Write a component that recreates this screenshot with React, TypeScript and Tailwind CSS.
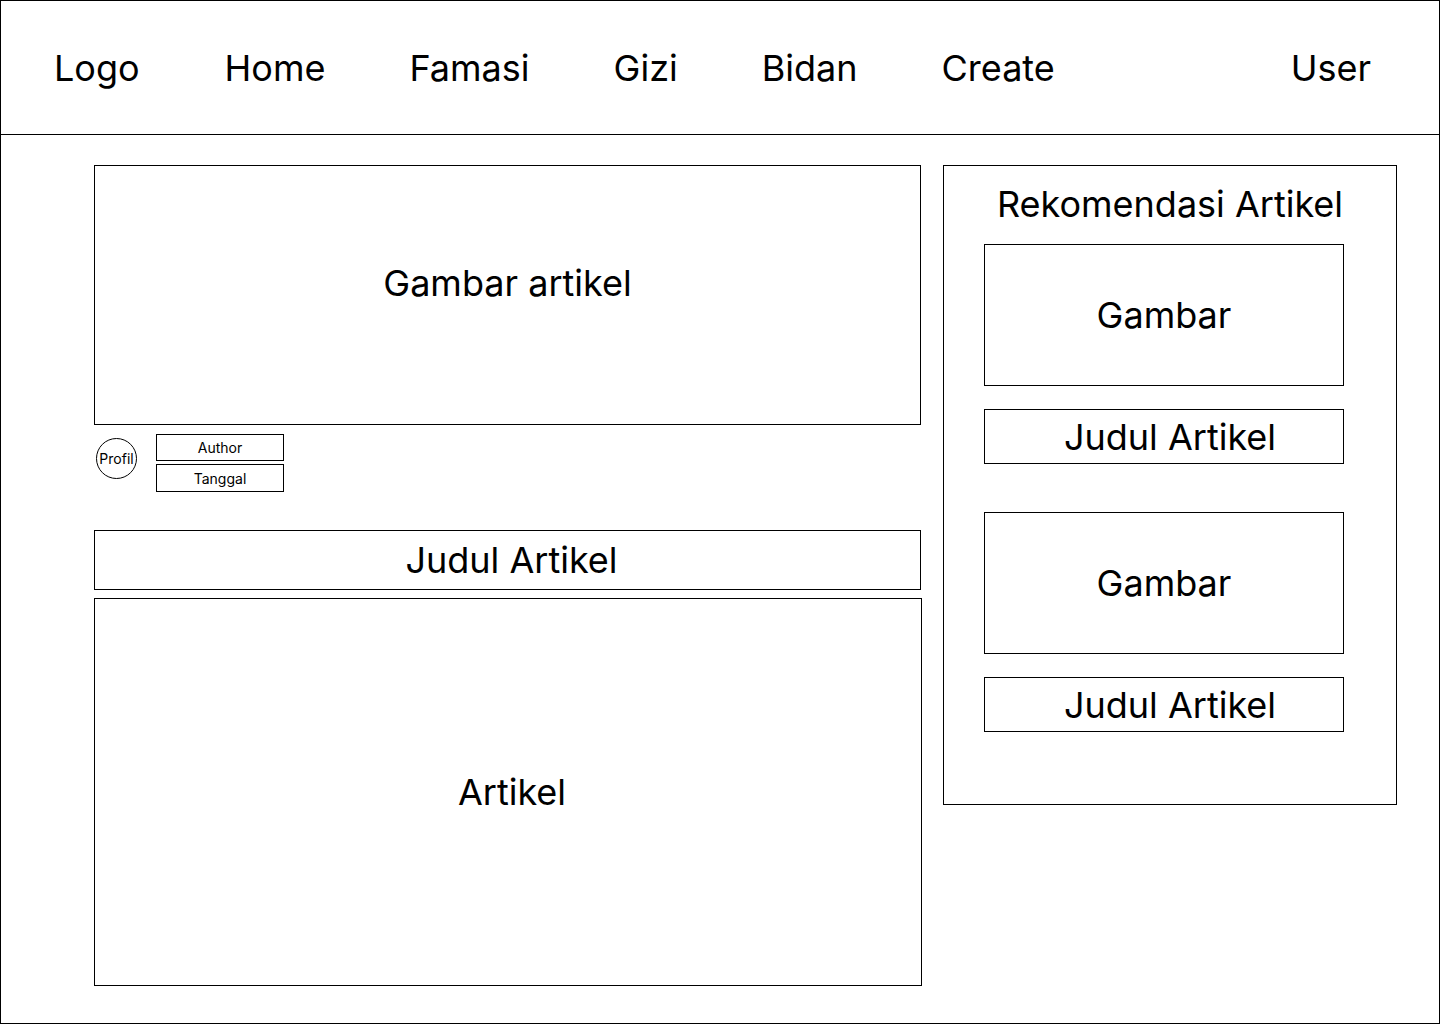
import React from "react"

const navItems = ["Home", "Famasi", "Gizi", "Bidan", "Create"]

// Small outlined box used across the wireframe
function Box({ className, children }: { className?: string; children?: React.ReactNode }) {
    return (
        <div className={"border border-black flex items-center justify-center " + (className ?? "")}>
            {children}
        </div>
    )
}

function RecoItem() {
    return (
        <div className="flex flex-col">
            <Box className="w-[360px] h-[142px] text-[36px]">Gambar</Box>
            <Box className="w-[360px] h-[55px] mt-[23px] text-[36px] pl-3">Judul Artikel</Box>
        </div>
    )
}

export default function App() {
    return (
        <div
            className="w-[1440px] h-[1024px] border border-black bg-white text-black flex flex-col"
            style={{ fontFamily: "Inter, 'Noto Sans', sans-serif" }}
        >
            {/* Top navigation */}
            <header className="h-[134px] shrink-0 border-b border-black flex items-center pl-[53px] pr-[68px] text-[36px] leading-none">
                <span>Logo</span>
                <nav className="flex gap-[84px] ml-[85px]">
                    {navItems.map((item) => (
                        <span key={item}>{item}</span>
                    ))}
                </nav>
                <span className="ml-auto">User</span>
            </header>

            <main className="flex gap-[21px] pl-[93px] pt-[30px]">
                {/* Left column: article */}
                <div className="flex flex-col w-[828px]">
                    <Box className="w-[827px] h-[260px] text-[36px] pb-6">Gambar artikel</Box>

                    <div className="flex items-start mt-[9px]">
                        <div className="mt-[4px] ml-[2px] w-[41px] h-[41px] rounded-full border border-black flex items-center justify-center text-[14px]">
                            Profil
                        </div>
                        <div className="flex flex-col gap-[3px] ml-[19px]">
                            <Box className="w-[128px] h-[27px] text-[14px]">Author</Box>
                            <Box className="w-[128px] h-[28px] text-[14px]">Tanggal</Box>
                        </div>
                    </div>

                    <Box className="w-[827px] h-[60px] mt-[38px] text-[36px] pl-2">Judul Artikel</Box>
                    <Box className="w-[828px] h-[388px] mt-[8px] text-[36px] pl-2">Artikel</Box>
                </div>

                {/* Right column: recommendations */}
                <aside className="w-[454px] h-[640px] border border-black flex flex-col pl-[40px] pt-[18px]">
                    <h2 className="h-[40px] leading-[40px] text-[36px] text-center pr-[40px] mb-[20px] whitespace-nowrap">
                        Rekomendasi Artikel
                    </h2>
                    <div className="flex flex-col gap-[48px]">
                        <RecoItem />
                        <RecoItem />
                    </div>
                </aside>
            </main>
        </div>
    )
}
